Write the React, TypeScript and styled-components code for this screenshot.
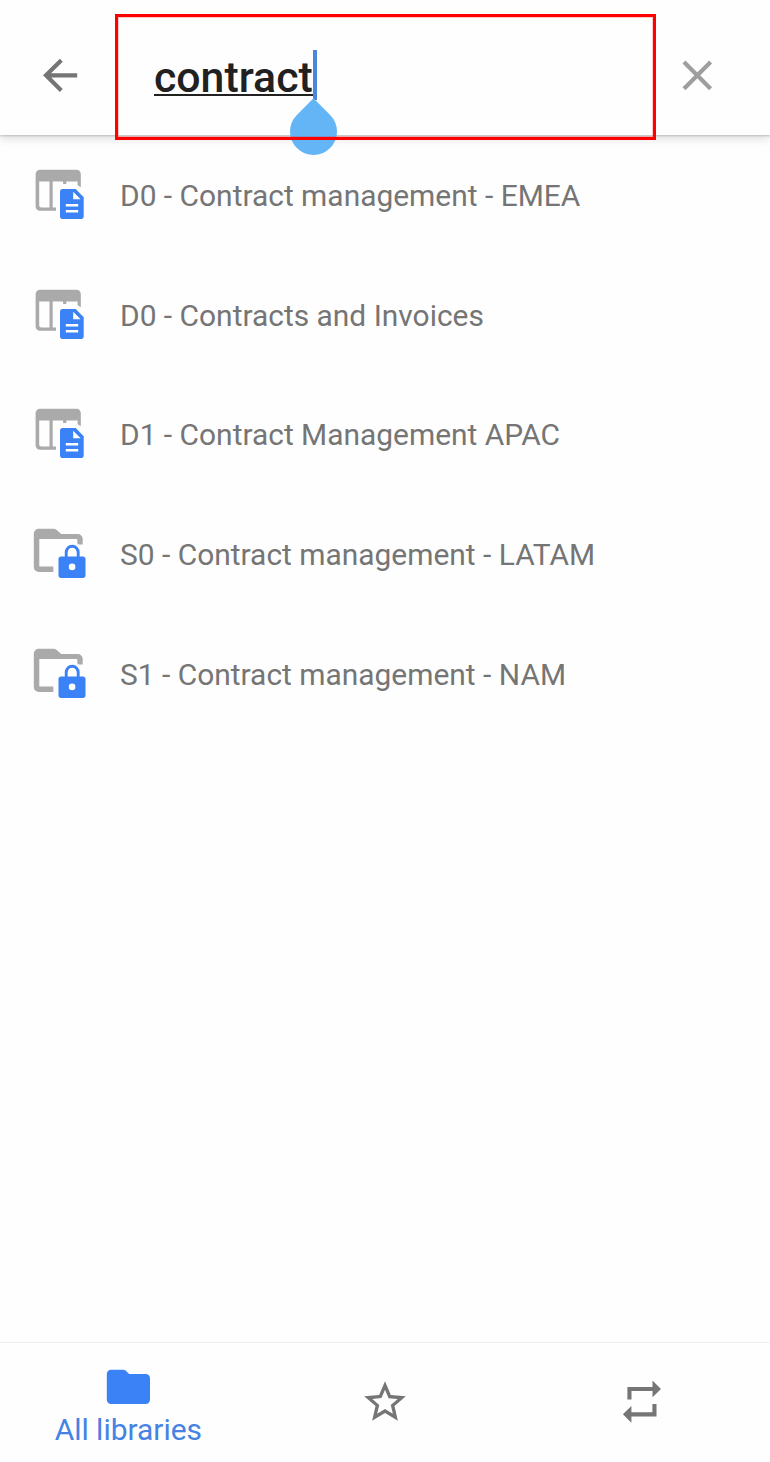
import React from "react";
import styled, { createGlobalStyle } from "styled-components";

const GlobalStyle = createGlobalStyle`
  * { box-sizing: border-box; }
  body { margin: 0; background: #fff; font-family: Roboto, "Liberation Sans", sans-serif; }
  svg { display: block; flex: none; }
`;

const Screen = styled.div`
  display: flex;
  flex-direction: column;
  width: 770px;
  height: 1462px;
  overflow: hidden;
  background: #fefefe;
`;

const Header = styled.header`
  position: relative;
  flex: none;
  display: flex;
  align-items: center;
  height: 135px;
  padding: 15px 43px 0 30px;
  background: #fefefe;
  box-shadow: 0 1px 2px rgba(0, 0, 0, 0.2), 0 4px 9px rgba(0, 0, 0, 0.12);
`;

const IconButton = styled.button`
  display: flex;
  flex: none;
  margin: 0;
  padding: 0;
  border: 0;
  background: none;
`;

const SearchField = styled.div`
  position: relative;
  flex: 1;
  margin-left: 64px;
  height: 60px;
  padding-top: 1px;
  display: flex;
  align-items: center;
`;

const Query = styled.span`
  font-size: 42.8px;
  font-weight: 500;
  line-height: 43px;
  height: 40px;
  width: 159px;
  white-space: nowrap;
  color: #212121;
  border-bottom: 2px solid #212121;
`;

const Caret = styled.span`
  position: absolute;
  left: 159px;
  top: 5px;
  width: 4px;
  height: 50px;
  background: #4a86dc;
`;

const DropHandle = styled.span`
  position: absolute;
  left: 135.5px;
  top: 62.5px;
  width: 47px;
  height: 47px;
  border-radius: 0 50% 50% 50%;
  transform: rotate(45deg);
  background: #64b5f6;
`;

const Highlight = styled.div`
  position: absolute;
  left: 115px;
  top: 14px;
  width: 541px;
  height: 126px;
  border: 3px solid #fe0000;
  box-shadow: inset 0 0 0 0.5px rgba(254, 0, 0, 0.4);
`;

const List = styled.ul`
  flex: 1;
  margin: 0;
  padding: 1px 0 0;
  list-style: none;
`;

const Row = styled.li`
  display: flex;
  align-items: center;
  gap: 30px;
  height: 119.8px;
  padding-left: 30px;
`;

const RowLabel = styled.span`
  font-size: 29.93px;
  line-height: 36px;
  color: #757575;
  white-space: nowrap;
`;

const TabBar = styled.nav`
  flex: none;
  display: grid;
  grid-template-columns: repeat(3, 1fr);
  height: 120px;
  border-top: 1px solid #efefef;
  background: #fefefe;
`;

const Tab = styled.div<{ $active?: boolean }>`
  display: flex;
  flex-direction: column;
  align-items: center;
  justify-content: ${(p) => (p.$active ? "flex-start" : "center")};
  padding-top: ${(p) => (p.$active ? "26px" : "0")};
  padding-bottom: ${(p) => (p.$active ? "0" : "1px")};
  gap: 7px;
  color: ${(p) => (p.$active ? "#4582e4" : "#757575")};
  font-size: 29.93px;
  line-height: 36px;
`;

const TableIcon = () => (
  <svg width="60" height="60" viewBox="30 165.9 60 60">
    <path
      fill="#aaa"
      fillRule="evenodd"
      d="M40 169.7h36.5a4.3 4.3 0 0 1 4.3 4.3v13.2l-3.2-2v-3.9h-11.3v2.7h-3.2v-2.7H52.7v26.1H56v3.3H40a4.4 4.4 0 0 1-4.4-4.4V174a4.4 4.4 0 0 1 4.4-4.4zM39.2 181.3v24a2.1 2.1 0 0 0 2.1 2.1h8.2v-26.1z"
    />
    <path fill="#3b82f6" d="M62.8 188.9h12.9l8 8.3v19a2.8 2.8 0 0 1-2.8 2.8H62.8a2.8 2.8 0 0 1-2.8-2.8v-24.5a2.8 2.8 0 0 1 2.8-2.8z" />
    <path fill="#fff" d="M73.2 191.7v7.4h7.4zM65.8 204h12.4v2.5H65.8zM65.8 209.9h12.4v2.5H65.8z" />
  </svg>
);

const LockedFolderIcon = () => (
  <svg width="60" height="60" viewBox="30 525.3 60 60">
    <path
      fill="#aaa"
      d="M38.8 529h14.8q1.8 0 3.1 1.2l4.5 4.1h16.5a5 5 0 0 1 5 5v5.6h-4.4q-1.1-1-1-2.3v-3.3h-38V566.9h14v5.4H38.8a5 5 0 0 1-5-5V534a5 5 0 0 1 5-5z"
    />
    <path fill="none" stroke="#3b82f6" strokeWidth="2.9" d="M66.2 558v-5a6 6.5 0 0 1 12 0v5" />
    <path
      fill="#3b82f6"
      fillRule="evenodd"
      d="M61.2 556.8h21.6a2.7 2.7 0 0 1 2.7 2.7v16a2.7 2.7 0 0 1-2.7 2.7h-21.6a2.7 2.7 0 0 1-2.7-2.7v-16a2.7 2.7 0 0 1 2.7-2.7zm10.9 7.1a3.3 3.3 0 1 0 0 6.6 3.3 3.3 0 1 0 0-6.6z"
    />
  </svg>
);

const BackIcon = () => (
  <svg width="60" height="60" viewBox="30 45 60 60" fill="none" stroke="#757575" strokeWidth="4.2">
    <path d="M77.2 75.3H45M61.3 60.2L46 75.3l15.3 15.3" />
  </svg>
);

const CloseIcon = () => (
  <svg width="60" height="60" viewBox="667.1 45 60 60" fill="none" stroke="#9e9e9e" strokeWidth="4.2">
    <path d="M684.1 62.1l26.6 26.6M710.7 62.1l-26.6 26.6" />
  </svg>
);

const FolderIcon = () => (
  <svg width="44" height="36" viewBox="106 1369 44 36" fill="#3b82f6">
    <path d="M111 1369.7h12.2q1.7 0 2.9 1.2l3 3.1h16.7a4.2 4.2 0 0 1 4.2 4.2v21.6a4.2 4.2 0 0 1-4.2 4.2H111a4.2 4.2 0 0 1-4.2-4.2v-25.9a4.2 4.2 0 0 1 4.2-4.2z" />
  </svg>
);

const StarIcon = () => (
  <svg width="50" height="50" viewBox="0 0 24 24" fill="currentColor">
    <path d="M22 9.24l-7.19-.62L12 2 9.19 8.63 2 9.24l5.46 4.73L5.82 21 12 17.27 18.18 21l-1.63-7.03L22 9.24zM12 15.4l-3.76 2.27 1-4.28-3.32-2.88 4.38-.38L12 6.1l1.71 4.04 4.38.38-3.32 2.88 1 4.28L12 15.4z" />
  </svg>
);

const RepeatIcon = () => (
  <svg width="48" height="48" viewBox="617.9 1378 48 48" fill="currentColor">
    <path d="M627.3 1386.9h25.1v-6.4l8.5 8.4-8.5 8.4v-6.2h-21v8.5h-4.1zM656.4 1404v12.5h-25.1v6.2l-8.5-8.4 8.5-8.4v6.4h21V1404z" />
  </svg>
);

const libraries = [
  { name: "D0 - Contract management - EMEA", locked: false },
  { name: "D0 - Contracts and Invoices", locked: false },
  { name: "D1 - Contract Management APAC", locked: false },
  { name: "S0 - Contract management - LATAM", locked: true },
  { name: "S1 - Contract management - NAM", locked: true },
];

export default function App() {
  return (
    <>
      <GlobalStyle />
      <Screen>
        <Header>
          <IconButton aria-label="Back"><BackIcon /></IconButton>
          <SearchField>
            <Query>contract</Query>
            <Caret />
            <DropHandle />
          </SearchField>
          <IconButton aria-label="Clear"><CloseIcon /></IconButton>
          <Highlight />
        </Header>
        <List>
          {libraries.map((item) => (
            <Row key={item.name}>
              {item.locked ? <LockedFolderIcon /> : <TableIcon />}
              <RowLabel>{item.name}</RowLabel>
            </Row>
          ))}
        </List>
        <TabBar>
          <Tab $active>
            <FolderIcon />
            <span>All libraries</span>
          </Tab>
          <Tab><StarIcon /></Tab>
          <Tab><RepeatIcon /></Tab>
        </TabBar>
      </Screen>
    </>
  );
}
